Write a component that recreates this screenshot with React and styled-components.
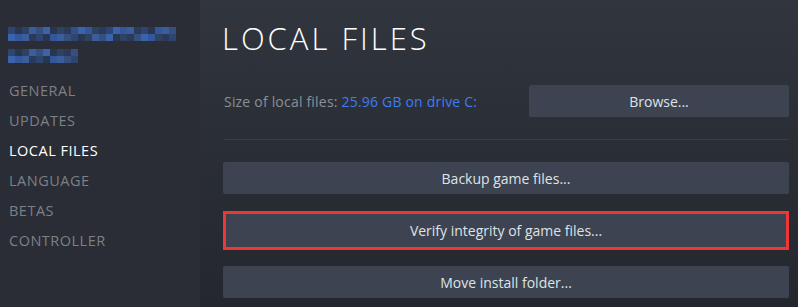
import React from "react";
import styled, { createGlobalStyle } from "styled-components";

const GlobalStyle = createGlobalStyle`
  html, body {
    margin: 0;
    padding: 0;
    background: #2a2d34;
  }
  * {
    box-sizing: border-box;
  }
`;

const Page = styled.div`
  width: 100vw;
  height: 100vh;
  display: flex;
  overflow: hidden;
  font-family: "Open Sans", "Liberation Sans", sans-serif;
`;

const Sidebar = styled.div`
  width: 200px;
  flex-shrink: 0;
  background: #2a2d35;
  padding: 27px 0 0 8px;
  display: flex;
  flex-direction: column;
`;

const Mosaic = styled.svg`
  display: block;
  margin-bottom: 8px;
`;

const NavList = styled.div`
  display: flex;
  flex-direction: column;
  margin-top: 5px;
  padding-left: 1px;
`;

const NavItem = styled.div`
  height: 30px;
  line-height: 30px;
  font-size: 14.5px;
  letter-spacing: 0.5px;
  color: ${(p) => (p.active ? "#ffffff" : "#7c8087")};
  font-weight: ${(p) => (p.active ? 500 : 400)};
`;

const Main = styled.div`
  flex: 1;
  background: linear-gradient(180deg, #31353e 0%, #2a2e35 45%, #24272e 100%);
  padding: 18px 9px 0 23px;
  display: flex;
  flex-direction: column;
`;

const Title = styled.h1`
  margin: 0 0 0 -1px;
  font-size: 31px;
  line-height: 40px;
  font-weight: 300;
  letter-spacing: 3px;
  color: #ffffff;
`;

const SizeRow = styled.div`
  display: flex;
  align-items: center;
  justify-content: space-between;
  margin-top: 27px;
`;

const SizeText = styled.div`
  font-size: 14px;
  letter-spacing: 0.2px;
  color: #8a9098;
  padding-left: 1px;
`;

const Accent = styled.span`
  color: #3e7cf4;
`;

const Divider = styled.div`
  height: 1px;
  background: #383c44;
  margin: 22px 0 22px 1px;
`;

const Actions = styled.div`
  display: flex;
  flex-direction: column;
  gap: ${(p) => p.gap}px;
`;

const Button = styled.div`
  width: ${(p) => p.width || "100%"};
  height: ${(p) => (p.highlighted ? 39 : 32)}px;
  margin: ${(p) => (p.highlighted ? "-3px 0 -4px" : "0")};
  display: flex;
  align-items: center;
  justify-content: center;
  background: #3d4350;
  border: ${(p) => (p.highlighted ? "3px solid #ee3636" : "none")};
  border-radius: ${(p) => (p.highlighted ? 0 : 2)}px;
  font-size: 14px;
  color: #dfe3e8;
`;

const blues = ["#2d4570", "#33579a", "#2a3a58", "#3a63aa", "#2f4262", "#35507f", "#283650", "#3b5d9c"];

function Blurred({ cols, width }) {
  const cells = [];
  for (let r = 0; r < 2; r++) {
    for (let c = 0; c < cols; c++) {
      const color = blues[(c * 5 + r * 3 + (c % 3)) % blues.length];
      cells.push(<rect key={r + "-" + c} x={c * 7} y={r * 7} width="7" height="7" fill={color} />);
    }
  }
  return (
    <Mosaic width={width} height="14" viewBox={`0 0 ${width} 14`}>
      {cells}
    </Mosaic>
  );
}

const navItems = ["GENERAL", "UPDATES", "LOCAL FILES", "LANGUAGE", "BETAS", "CONTROLLER"];

export default function App() {
  return (
    <>
      <GlobalStyle />
      <Page>
        <Sidebar>
          <Blurred cols={24} width={168} />
          <Blurred cols={10} width={70} />
          <NavList>
            {navItems.map((item) => (
              <NavItem key={item} active={item === "LOCAL FILES"}>
                {item}
              </NavItem>
            ))}
          </NavList>
        </Sidebar>
        <Main>
          <Title>LOCAL FILES</Title>
          <SizeRow>
            <SizeText>
              Size of local files: <Accent>25.96 GB on drive C:</Accent>
            </SizeText>
            <Button width="260px">Browse...</Button>
          </SizeRow>
          <Divider />
          <Actions gap={20}>
            <Button>Backup game files...</Button>
            <Button highlighted>Verify integrity of game files...</Button>
            <Button>Move install folder...</Button>
          </Actions>
        </Main>
      </Page>
    </>
  );
}
